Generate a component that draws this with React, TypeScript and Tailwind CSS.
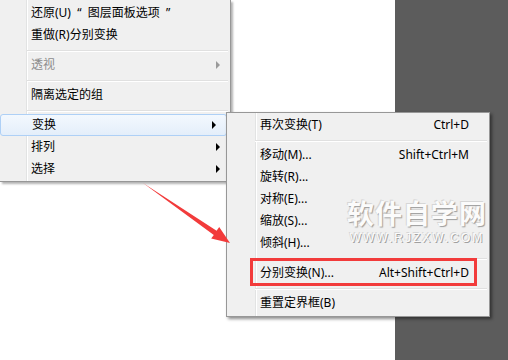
import React from "react";

const font = { fontFamily: '"Noto Sans", "Noto Sans CJK SC", sans-serif' };

function Arrow({ gray }: { gray?: boolean }) {
  return (
    <span
      className={
        "block w-0 h-0 border-y-[4px] border-y-transparent border-l-[4px] " +
        (gray ? "border-l-[#9a9a9a]" : "border-l-black")
      }
    />
  );
}

function MainItem({
  label,
  arrow,
  disabled,
  active,
}: {
  label: React.ReactNode;
  arrow?: boolean;
  disabled?: boolean;
  active?: boolean;
}) {
  return (
    <div
      className={
        "h-[22px] flex items-center justify-between pl-[31px] pr-[10px] text-[12px] " +
        (disabled ? "text-[#8d8d8d] " : "text-black ") +
        (active
          ? "mr-[3px] rounded-[3px] border border-[#aed0f6] bg-[linear-gradient(to_bottom,#f3f8fe,#e4eefa)] pl-[30px] pr-[6px]"
          : "")
      }
    >
      <span className="whitespace-pre">{label}</span>
      {arrow && <Arrow gray={disabled} />}
    </div>
  );
}

function Sep({ left }: { left: string }) {
  return (
    <div className={"h-[8px] pt-[4px] pr-[2px] " + left}>
      <div className="h-px bg-[#e0e0e0]" />
      <div className="h-px bg-white" />
    </div>
  );
}

function SubItem({ label, sc }: { label: string; sc?: string }) {
  return (
    <div className="h-[22px] flex items-center justify-between pl-[33px] pr-[20px] text-[12px] text-black">
      <span>{label}</span>
      {sc && <span>{sc}</span>}
    </div>
  );
}

export default function App() {
  return (
    <div
      className="relative w-[508px] h-[360px] bg-white flex overflow-hidden"
      style={font}
    >
      <div className="w-[395px] h-full">
        <div className="w-[231px] pt-[2px] pb-[1px] bg-[linear-gradient(to_right,#f0f0f0_26px,#e2e3e3_26px,#e2e3e3_27px,#ffffff_27px,#ffffff_28px,#f0f0f0_28px)] border-r border-b border-[#979797] shadow-[2px_2px_2px_rgba(0,0,0,0.3)]">
          <MainItem label={"还原(U)  “  图层面板选项  ”"} />
          <MainItem label="重做(R)分别变换" />
          <Sep left="pl-[27px]" />
          <MainItem label="透视" arrow disabled />
          <Sep left="pl-[27px]" />
          <MainItem label="隔离选定的组" />
          <Sep left="pl-[27px]" />
          <MainItem label="变换" arrow active />
          <MainItem label="排列" arrow />
          <MainItem label="选择" arrow />
        </div>
      </div>
      <div className="flex-1 h-full bg-[#5c5c5c]" />

      {/* submenu */}
      <div className="absolute left-[226px] top-[112px] w-[264px] pt-[1px] pb-[2px] border border-[#979797] shadow-[2px_2px_3px_rgba(0,0,0,0.45)] bg-[linear-gradient(to_right,#f0f0f0_28px,#e2e3e3_28px,#e2e3e3_29px,#ffffff_29px,#ffffff_30px,#f0f0f0_30px)]">
        <SubItem label="再次变换(T)" sc="Ctrl+D" />
        <Sep left="pl-[28px]" />
        <SubItem label="移动(M)..." sc="Shift+Ctrl+M" />
        <SubItem label="旋转(R)..." />
        <SubItem label="对称(E)..." />
        <SubItem label="缩放(S)..." />
        <SubItem label="倾斜(H)..." />
        <Sep left="pl-[28px]" />
        <SubItem label="分别变换(N)..." sc="Alt+Shift+Ctrl+D" />
        <Sep left="pl-[28px]" />
        <SubItem label="重置定界框(B)" />
      </div>

      {/* watermark */}
      <div className="absolute left-[347px] top-[200px] flex flex-col items-center gap-[4px] pointer-events-none">
        <div className="text-[27px] leading-[28px] font-bold text-[#fbfbfb] tracking-[1px] [text-shadow:1px_1px_1px_#9c9c9c,-1px_-1px_0_#d6d6d6]">
          软件自学网
        </div>
        <div
          className="text-[12px] leading-[12px] text-[#fbfbfb] tracking-[2px] [text-shadow:1px_1px_0_#a0a0a0,-1px_-1px_0_#d6d6d6]"
          style={{ fontFamily: '"Liberation Sans", sans-serif' }}
        >
          WWW.RJZXW.COM
        </div>
      </div>

      {/* red box */}
      <div className="absolute left-[250px] top-[258px] w-[227px] h-[28px] border-[3px] border-[#f23b3b] pointer-events-none" />

      {/* red arrow */}
      <svg
        className="absolute inset-0 pointer-events-none"
        width={508}
        height={360}
        viewBox="0 0 508 360"
      >
        <polygon
          points="143,183 216.6,230.7 219.2,227 230,243 211.2,238.6 213.8,234.9"
          fill="#f23b3b"
        />
      </svg>
    </div>
  );
}
